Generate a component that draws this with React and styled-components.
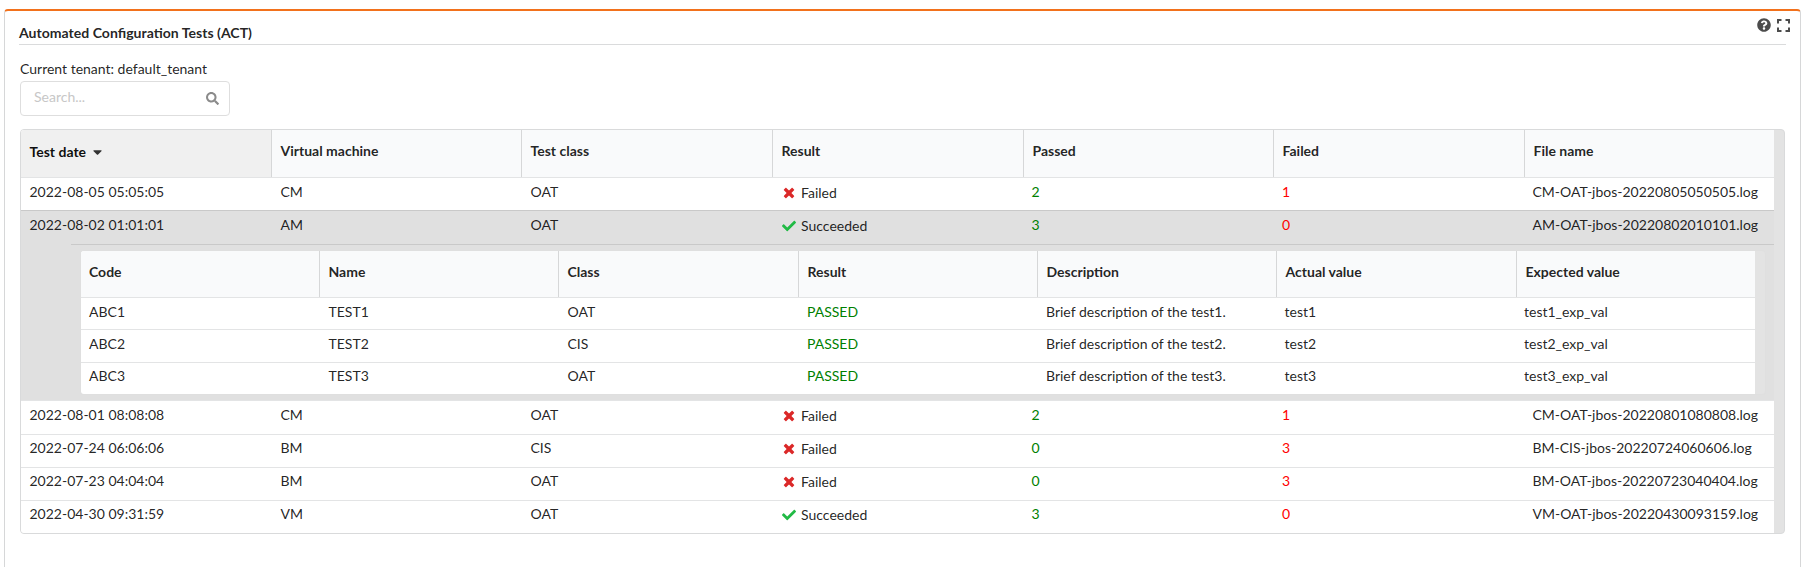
import React from "react";
import styled, { createGlobalStyle } from "styled-components";
import { FaCaretDown, FaCheck, FaQuestionCircle, FaSearch } from "react-icons/fa";

const Global = createGlobalStyle`
  *, *::before, *::after { box-sizing: border-box; }
  body { margin: 0; background: #fff; overflow: hidden; font: 14px/20px Lato, sans-serif; color: rgba(0, 0, 0, 0.87); }
  input { font: inherit; }
`;
const Page = styled.main`
  height: 567px;
  padding: 9px 1px 0 4px;
  overflow: hidden;
`;
const Panel = styled.section`
  height: 580px;
  border: 1px solid #d6d7d8;
  border-top: 2px solid #f2711c;
  border-radius: 4px;
  padding: 0 14px;
`;
const PanelHeader = styled.header`
  display: flex;
  justify-content: space-between;
  height: 34px;
  border-bottom: 1px solid #dadbdc;
`;
const Title = styled.h1`
  margin: 12px 0 0;
  font-size: 14.07px;
  line-height: 20px;
  font-weight: 700;
`;
const Tools = styled.div`
  display: flex;
  gap: 6.5px;
  margin: 7px -4px 0 0;
  color: #4c4c4c;
`;
const HelpIcon = styled(FaQuestionCircle)`
  display: block;
  width: 14px;
  height: 14px;
`;
const ExpandIcon = styled.svg`
  display: block;
  width: 13px;
  height: 13px;
  margin-top: 1px;
  fill: currentColor;
`;
const Content = styled.div`
  padding: 14px 1px 0;
`;
const Tenant = styled.div`
  height: 22px;
  line-height: 20px;
`;
const SearchBox = styled.label`
  display: flex;
  align-items: center;
  width: 210px;
  height: 35px;
  padding: 0 9px 0 13px;
  border: 1px solid #dedede;
  border-radius: 4px;
`;
const SearchInput = styled.input`
  flex: 1;
  min-width: 0;
  padding: 0 0 3px;
  border: 0;
  outline: 0;
  background: transparent;
  &::placeholder { color: #c7c7c7; opacity: 1; }
`;
const SearchIcon = styled(FaSearch)`
  flex: none;
  width: 13px;
  height: 13px;
  margin-right: 1px;
  color: #8b8b8b;
`;
const Table = styled.div`
  margin-top: ${(p) => (p.$nested ? 0 : 13)}px;
  padding-right: 10px;
  border: 1px solid ${(p) => (p.$nested ? "#dfdfdf" : "#d9dadb")};
  border-radius: 4px;
  background: #e3e3e3;
  overflow: hidden;
`;
const Row = styled.div`
  display: grid;
  grid-template-columns: ${(p) =>
    p.$nested ? "238px 239px 240px 239px 239px 240px 1fr" : "250px 250px 251px 251px 250px 251px 1fr"};
  height: ${(p) => p.$h || 33}px;
  border-bottom: ${(p) => (p.$last ? 0 : 1)}px solid ${(p) => p.$line || "#e3e4e5"};
  background: ${(p) => (p.$active ? "#e0e0e0" : "#fff")};
`;
const HeadCell = styled.div`
  display: flex;
  align-items: center;
  padding: 0 0 ${(p) => (p.$nested || p.$sorted ? 4 : 6)}px;
  padding-left: ${(p) => (p.$first && p.$nested ? 8 : 8.5)}px;
  border-left: ${(p) => (p.$first ? 0 : 1)}px solid #d6d7d8;
  background: ${(p) => (p.$sorted ? "#f0f0f0" : "#f9fafb")};
  color: ${(p) => (p.$sorted ? "rgba(0,0,0,.95)" : "inherit")};
  font-weight: 700;
`;
const SortArrow = styled(FaCaretDown)`
  width: 9px;
  height: 14px;
  margin-left: 7px;
  color: #333;
`;
const Cell = styled.div`
  padding: ${(p) => (p.$raised ? 3 : 4)}px 0 0 ${(p) => p.$pad || 8.5}px;
  line-height: 20px;
  white-space: nowrap;
  color: ${(p) => p.$color || "inherit"};
`;
const Result = styled.span`
  display: flex;
  align-items: center;
  padding: 1px 0 0 1px;
`;
const SuccessIcon = styled(FaCheck)`
  width: 14px;
  height: 14px;
  margin: 0 5px 1px 0;
  color: #21ba45;
`;
const FailureIcon = styled.svg`
  width: 14px;
  height: 14px;
  margin: 0 5px 1px 0;
  fill: #db2828;
`;
const Details = styled.div`
  padding-left: 50px;
  background: #e0e0e0;
  border-bottom: 1px solid #e3e4e5;
`;
const DetailsInner = styled.div`
  padding: 5px 8px 5px 9px;
  border-top: 1px solid #c9c9c9;
`;

const heads = ["Test date", "Virtual machine", "Test class", "Result", "Passed", "Failed", "File name"];
const detailHeads = ["Code", "Name", "Class", "Result", "Description", "Actual value", "Expected value"];
const detailPads = [8, 9.5, 9.5, 9, 9, 8.5, 8];
const before = [
  ["2022-08-05 05:05:05", "CM", "OAT", false, 2, 1, "CM-OAT-jbos-20220805050505.log"],
  ["2022-08-02 01:01:01", "AM", "OAT", true, 3, 0, "AM-OAT-jbos-20220802010101.log"],
];
const after = [
  ["2022-08-01 08:08:08", "CM", "OAT", false, 2, 1, "CM-OAT-jbos-20220801080808.log"],
  ["2022-07-24 06:06:06", "BM", "CIS", false, 0, 3, "BM-CIS-jbos-20220724060606.log"],
  ["2022-07-23 04:04:04", "BM", "OAT", false, 0, 3, "BM-OAT-jbos-20220723040404.log"],
  ["2022-04-30 09:31:59", "VM", "OAT", true, 3, 0, "VM-OAT-jbos-20220430093159.log"],
];
const details = [
  ["ABC1", "TEST1", "OAT", "PASSED", "Brief description of the test1.", "test1", "test1_exp_val"],
  ["ABC2", "TEST2", "CIS", "PASSED", "Brief description of the test2.", "test2", "test2_exp_val"],
  ["ABC3", "TEST3", "OAT", "PASSED", "Brief description of the test3.", "test3", "test3_exp_val"],
];

const Cross = () => (
  <FailureIcon viewBox="-64 0 512 512">
    <path d="M323.1 441l53.9-53.9c9.4-9.4 9.4-24.5 0-33.9L279.8 256l97.2-97.2c9.4-9.4 9.4-24.5 0-33.9L323.1 71c-9.4-9.4-24.5-9.4-33.9 0L192 168.2 94.8 71c-9.4-9.4-24.5-9.4-33.9 0L7 124.9c-9.4 9.4-9.4 24.5 0 33.9l97.2 97.2L7 353.2c-9.4 9.4-9.4 24.5 0 33.9L60.9 441c9.4 9.4 24.5 9.4 33.9 0l97.2-97.2 97.2 97.2c9.3 9.3 24.5 9.3 33.9 0z" />
  </FailureIcon>
);

const TestRow = ({ data, raised, ...rest }) => (
  <Row {...rest}>
    <Cell $raised={raised}>{data[0]}</Cell>
    <Cell $raised={raised} $pad={9.5}>{data[1]}</Cell>
    <Cell $raised={raised} $pad={9.5}>{data[2]}</Cell>
    <Cell $raised={raised} $pad={9}>
      <Result>
        {data[3] ? <SuccessIcon /> : <Cross />}
        {data[3] ? "Succeeded" : "Failed"}
      </Result>
    </Cell>
    <Cell $raised={raised} $color="green">{data[4]}</Cell>
    <Cell $raised={raised} $pad={9} $color="red">{data[5]}</Cell>
    <Cell $raised={raised}>{data[6]}</Cell>
  </Row>
);

export default function App() {
  return (
    <Page>
      <Global />
      <Panel>
        <PanelHeader>
          <Title>Automated Configuration Tests (ACT)</Title>
          <Tools>
            <HelpIcon />
            <ExpandIcon viewBox="0 0 13 13">
              <path d="M0 0h4.500v2H2v2.500H0zM8.500 0H13v4.500h-2V2H8.500zM0 8.500h2V11h2.500v2H0zM11 8.500h2V13H8.500v-2H11z" />
            </ExpandIcon>
          </Tools>
        </PanelHeader>
        <Content>
          <Tenant>Current tenant: default_tenant</Tenant>
          <SearchBox>
            <SearchInput placeholder="Search..." />
            <SearchIcon />
          </SearchBox>
          <Table>
            <Row $h={48}>
              {heads.map((h, i) => (
                <HeadCell key={h} $first={i === 0} $sorted={i === 0}>{h}{i === 0 && <SortArrow viewBox="0 0 320 512" />}</HeadCell>
              ))}
            </Row>
            <TestRow data={before[0]} $line="#c9c9c9" />
            <TestRow data={before[1]} $active $last />
            <Details>
              <DetailsInner>
                <Table $nested>
                  <Row $nested $h={47}>
                    {detailHeads.map((h, i) => <HeadCell key={h} $nested $first={i === 0}>{h}</HeadCell>)}
                  </Row>
                  {details.map((r, n) => (
                    <Row key={r[0]} $nested $h={[32, 33, 31][n]} $last={n === 2}>
                      {r.map((v, i) => (
                        <Cell key={i} $raised={n === 2} $pad={detailPads[i]} $color={i === 3 ? "green" : undefined}>{v}</Cell>
                      ))}
                    </Row>
                  ))}
                </Table>
              </DetailsInner>
            </Details>
            {after.map((r, i) => (
              <TestRow key={r[0]} data={r} raised={i > 0} $last={i === 3} $h={[34, 33, 33, 32][i]} />
            ))}
          </Table>
        </Content>
      </Panel>
    </Page>
  );
}
